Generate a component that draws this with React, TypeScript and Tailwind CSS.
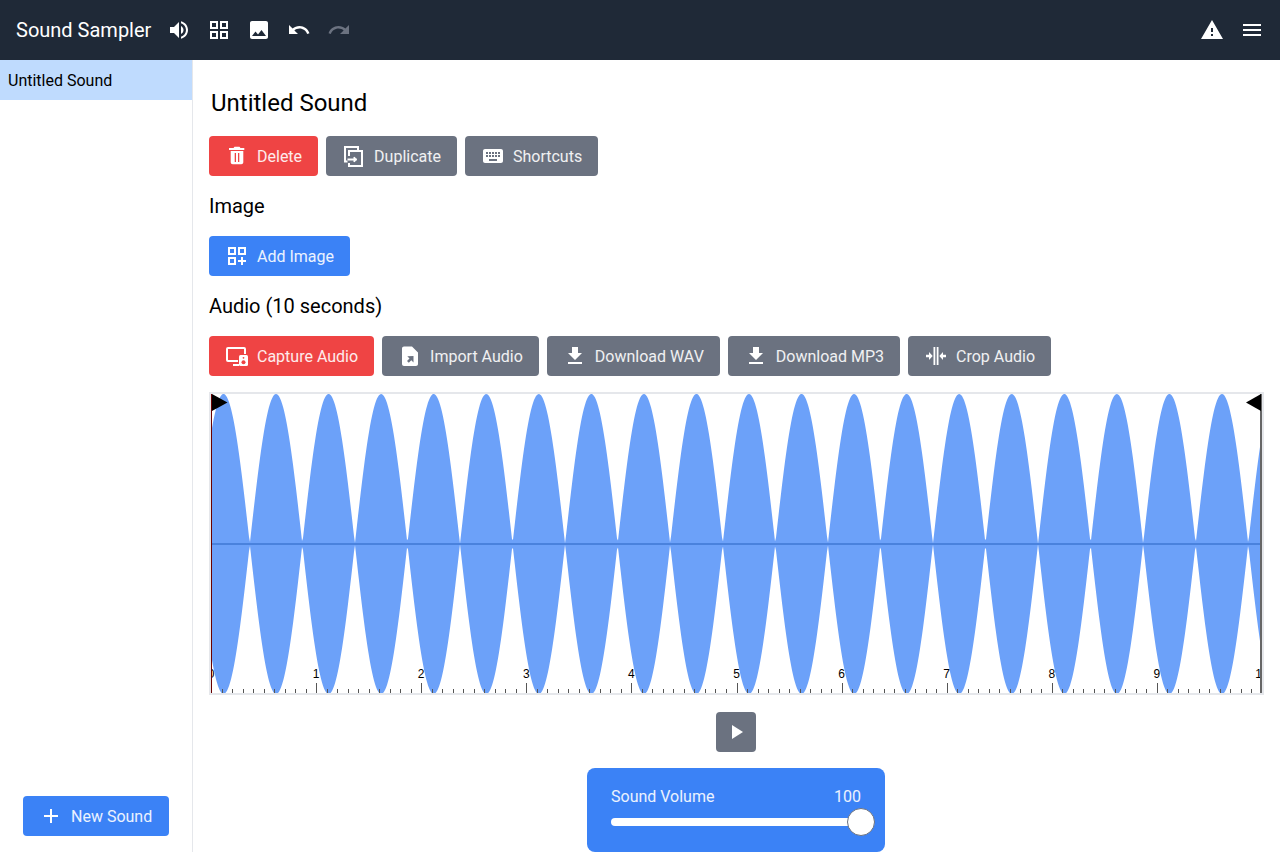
import React from "react";

const paths: Record<string, string> = {
  volume: "M3 9v6h4l5 5V4L7 9H3zm13.5 3c0-1.77-1.02-3.29-2.5-4.03v8.05c1.48-.73 2.5-2.25 2.5-4.02zM14 3.23v2.06c2.89.86 5 3.54 5 6.71s-2.11 5.85-5 6.71v2.06c4.01-.91 7-4.49 7-8.77s-2.99-7.86-7-8.77z",
  grid: "M3 3v8h8V3H3zm6 6H5V5h4v4zm-6 4v8h8v-8H3zm6 6H5v-4h4v4zm4-16v8h8V3h-8zm6 6h-4V5h4v4zm-6 4v8h8v-8h-8zm6 6h-4v-4h4v4z",
  image: "M21 19V5c0-1.1-.9-2-2-2H5c-1.1 0-2 .9-2 2v14c0 1.1.9 2 2 2h14c1.1 0 2-.9 2-2zM8.5 13.5l2.5 3.01L14.5 12l4.5 6H5l3.5-4.5z",
  undo: "M12.5 8c-2.65 0-5.05.99-6.9 2.6L2 7v9h9l-3.62-3.62c1.39-1.16 3.16-1.88 5.12-1.88 3.54 0 6.55 2.31 7.6 5.5l2.37-.78C21.08 11.03 17.15 8 12.5 8z",
  redo: "M18.4 10.6C16.55 8.99 14.15 8 11.5 8c-4.65 0-8.58 3.03-9.96 7.22L3.9 16c1.05-3.19 4.05-5.5 7.6-5.5 1.95 0 3.73.72 5.12 1.88L13 16h9V7l-3.6 3.6z",
  warning: "M1 21h22L12 2 1 21zm12-3h-2v-2h2v2zm0-4h-2v-4h2v4z",
  menu: "M3 18h18v-2H3v2zm0-5h18v-2H3v2zm0-7v2h18V6H3z",
  trash: "M19.300 4h-3.800l-1-1.300h-5L8.500 4H4v2h15.300V4zM5.700 7v11.300c0 1.100.9 2 2 2h8.600c1.100 0 2-.9 2-2V7H5.700zm4 2h1.300v9H9.700V9zM13 9h1.300v9H13V9z",
  keyboard: "M20 5H4c-1.1 0-1.99.9-1.99 2L2 17c0 1.1.9 2 2 2h16c1.1 0 2-.9 2-2V7c0-1.1-.9-2-2-2zm-9 3h2v2h-2V8zm0 3h2v2h-2v-2zM8 8h2v2H8V8zm0 3h2v2H8v-2zm-1 2H5v-2h2v2zm0-3H5V8h2v2zm9 7H8v-2h8v2zm0-4h-2v-2h2v2zm0-3h-2V8h2v2zm3 3h-2v-2h2v2zm0-3h-2V8h2v2z",
  addImage: "M3 3v8h8V3H3zm6 6H5V5h4v4zm-6 4v8h8v-8H3zm6 6H5v-4h4v4zm4-16v8h8V3h-8zm6 6h-4V5h4v4zm-1 4h-2v3h-3v2h3v3h2v-3h3v-2h-3v-3z",
  download: "M19 9h-4V3H9v6H5l7 7 7-7zM5 18v2h14v-2H5z",
  play: "M8 5v14l11-7z",
  plus: "M19 13h-6v6h-2v-6H5v-2h6V5h2v6h6v2z",
  importFile: "M14 2.500H6c-1.100 0-2 .9-2 2V20c0 1.100.9 2 2 2h12c1.100 0 2-.9 2-2V8.500l-6-6zM15.500 12v6.500l-2.200-2.200-2.500 2.500-1.800-1.800 2.500-2.500-2.200-2.200L15.500 12z",
  crop: "M9.500 3h1.800v18H9.500zM12.700 3h1.800v18h-1.800zM2 10.800h3V8l3.700 4L5 16v-2.800H2zM22 10.800h-3V8l-3.700 4 3.700 4v-2.800h3z",
};

function Icon({ name, className = "" }: { name: string; className?: string }) {
  return (
    <svg viewBox="0 0 24 24" className={"w-6 h-6 shrink-0 fill-current " + className}>
      <path d={paths[name]} fillRule="evenodd" />
    </svg>
  );
}

function DuplicateIcon() {
  return (
    <svg viewBox="0 0 24 24" className="w-6 h-6 shrink-0 fill-none stroke-white" strokeWidth="2">
      <path d="M5.500 17.500H3V3h13v3" />
      <path d="M7 12V7h13v15H7v-3" />
      <path d="M5.500 15.500H12" />
      <path d="M12 13l3 2.500-3 2.500z" className="fill-white" strokeWidth="1" />
    </svg>
  );
}

function CaptureIcon() {
  return (
    <svg viewBox="0 0 24 24" className="w-6 h-6 shrink-0">
      <path d="M13 17H3a1 1 0 0 1-1-1V5a1 1 0 0 1 1-1h16a1 1 0 0 1 1 1v5" fill="none" stroke="white" strokeWidth="2" />
      <path d="M8 20h6v2H8z" fill="white" />
      <rect x="14" y="11" width="9" height="11" rx="1.500" fill="white" />
      <circle cx="18.500" cy="13.800" r="0.900" fill="#ef4444" />
      <circle cx="18.500" cy="18.300" r="2" fill="#ef4444" />
    </svg>
  );
}

function Btn({ color, icon, width = "", children }: { color: string; icon: React.ReactNode; width?: string; children: React.ReactNode }) {
  return (
    <button className={"h-10 pl-4 pr-4 rounded flex items-center gap-2 text-white/90 text-base " + color + " " + width}>
      <span className="text-white">{icon}</span>
      <span className="pt-0.5">{children}</span>
    </button>
  );
}

function HeaderBtn({ name, dim }: { name: string; dim?: boolean }) {
  return (
    <button className={"w-10 h-10 flex items-center justify-center " + (dim ? "text-[#6b7280]" : "text-white")}>
      <Icon name={name} />
    </button>
  );
}

const W = 1051;
const H = 299;

function Wave() {
  const amp = (x: number) => Math.abs(Math.cos((Math.PI * (x - 12.5)) / 52.55)) * 150;

  let top = "";
  for (let x = 0; x <= W; x++) top += `${x},${(150 - amp(x)).toFixed(1)} `;
  let bottom = "";
  for (let x = W; x >= 0; x--) bottom += `${x},${(150 + amp(x)).toFixed(1)} `;

  const ticks = [];
  for (let i = 0; i <= 100; i++) {
    const x = Math.round(10.51 * i) + 0.5;
    const big = i % 10 === 0;
    ticks.push(<line key={i} x1={x} x2={x} y1={big ? 289 : 295} y2={H} stroke="#555" />);
  }

  const labels = [];
  for (let i = 0; i <= 10; i++) {
    labels.push(
      <text key={i} x={105.1 * i} y={284} textAnchor="middle" fontSize="12" fontFamily="Liberation Sans, sans-serif" fill="#000">
        {i}
      </text>
    );
  }

  return (
    <div className="w-[1055px] h-[303px] border-2 border-[#e5e7eb]">
      <svg width={W} height={H} viewBox={`0 0 ${W} ${H}`} className="block overflow-hidden">
        <polygon points={top + bottom} fill="#6ca1f9" />
        <line x1="0" x2={W} y1="150" y2="150" stroke="#4a82dd" strokeWidth="2" />
        {ticks}
        {labels}
        <line x1="0.500" x2="0.500" y1="0" y2={H} stroke="#6b0000" />
        <line x1="1050" x2="1050" y1="0" y2={H} stroke="#666" strokeWidth="2" />
        <polygon points="1,0 16.500,8.500 1,17" fill="#000" />
        <polygon points="1050,0 1035,8.500 1050,17" fill="#000" />
      </svg>
    </div>
  );
}

export default function App() {
  return (
    <div className="h-screen overflow-hidden flex flex-col font-['Roboto',sans-serif] text-black">
      <header className="h-[60px] shrink-0 bg-[#1f2937] flex items-center pl-4 pr-2 text-white">
        <span className="text-xl mr-2">Sound Sampler</span>
        <HeaderBtn name="volume" />
        <HeaderBtn name="grid" />
        <HeaderBtn name="image" />
        <HeaderBtn name="undo" />
        <HeaderBtn name="redo" dim />
        <div className="flex-1" />
        <HeaderBtn name="warning" />
        <HeaderBtn name="menu" />
      </header>

      <div className="flex-1 flex min-h-0">
        <aside className="w-[193px] shrink-0 border-r border-[#e5e7eb] flex flex-col justify-between">
          <div className="h-10 bg-[#bfdbfe] flex items-center px-2 pt-0.5 text-base">Untitled Sound</div>
          <div className="pb-4 pl-[23px]">
            <Btn color="bg-[#3b82f6]" width="w-[146px]" icon={<Icon name="plus" />}>New Sound</Btn>
          </div>
        </aside>

        <main className="flex-1 flex flex-col gap-4 pl-4 pt-[27px] min-w-0">
          <h1 className="text-2xl leading-8 pl-0.5 h-[33px]">Untitled Sound</h1>
          <div className="flex gap-2">
            <Btn color="bg-[#ef4444]" icon={<Icon name="trash" />}>Delete</Btn>
            <Btn color="bg-[#6b7280]" icon={<DuplicateIcon />}>Duplicate</Btn>
            <Btn color="bg-[#6b7280]" icon={<Icon name="keyboard" />}>Shortcuts</Btn>
          </div>
          <h2 className="text-xl leading-7">Image</h2>
          <div className="flex gap-2">
            <Btn color="bg-[#3b82f6]" icon={<Icon name="addImage" />}>Add Image</Btn>
          </div>
          <h2 className="text-xl leading-7">Audio (10 seconds)</h2>
          <div className="flex gap-2">
            <Btn color="bg-[#ef4444]" icon={<CaptureIcon />}>Capture Audio</Btn>
            <Btn color="bg-[#6b7280]" icon={<Icon name="importFile" />}>Import Audio</Btn>
            <Btn color="bg-[#6b7280]" icon={<Icon name="download" />}>Download WAV</Btn>
            <Btn color="bg-[#6b7280]" icon={<Icon name="download" />}>Download MP3</Btn>
            <Btn color="bg-[#6b7280]" icon={<Icon name="crop" />}>Crop Audio</Btn>
          </div>
          <Wave />
          <div className="w-[1054px] flex flex-col items-center gap-4 mt-px">
            <button className="w-10 h-10 rounded bg-[#6b7280] flex items-center justify-center text-white">
              <Icon name="play" />
            </button>
            <div className="w-[298px] h-[84px] rounded-lg bg-[#3b82f6] px-6 pt-[17px] text-white/90">
              <div className="flex justify-between text-base leading-6">
                <span>Sound Volume</span>
                <span>100</span>
              </div>
              <div className="relative h-2 rounded-full bg-white mt-[9px]">
                <div className="absolute -right-3.5 -top-2.5 w-7 h-7 rounded-full bg-white border border-[#6b7280]" />
              </div>
            </div>
          </div>
        </main>
      </div>
    </div>
  );
}
